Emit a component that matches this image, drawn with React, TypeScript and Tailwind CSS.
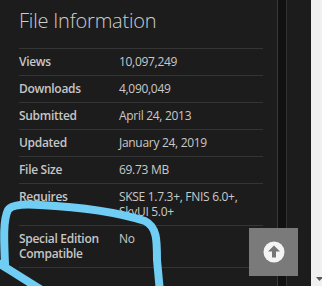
import React from "react";

const rows: { label: React.ReactNode; value: React.ReactNode; tall?: boolean }[] = [
  { label: "Views", value: "10,097,249" },
  { label: "Downloads", value: "4,090,049" },
  { label: "Submitted", value: "April 24, 2013" },
  { label: "Updated", value: "January 24, 2019" },
  { label: "File Size", value: "69.73 MB" },
  {
    label: "Requires",
    value: (
      <>
        SKSE 1.7.3+, FNIS 6.0+,
        <br />
        SkyUI 5.0+
      </>
    ),
  },
  {
    label: (
      <>
        Special Edition
        <br />
        Compatible
      </>
    ),
    value: "No",
  },
];

export default function App() {
  return (
    <div
      className="relative w-[322px] h-[286px] overflow-hidden flex bg-[#1c1c1c] text-[#c9c9c9]"
      style={{ fontFamily: '"Open Sans", "Noto Sans", sans-serif' }}
    >
      <div className="w-[277px] shrink-0 pl-[19px] pr-[14px]">
        <h2 className="pt-[6px] text-[20px] leading-[29px] font-light tracking-[-0.2px] text-[#cdcdcd]">
          File Information
        </h2>
        <div className="mt-[13px] border-t border-[#353535]">
          {rows.map((r, i) => (
            <div
              key={i}
              className="flex border-b border-[#353535] pt-[5px] pb-[6px] text-[12px] leading-[15px] tracking-[-0.3px]"
            >
              <div className="w-[100px] shrink-0 font-semibold text-[#c6c6c6]">{r.label}</div>
              <div className="flex-1 text-[#c9c9c9]">{r.value}</div>
            </div>
          ))}
        </div>
      </div>
      <div className="w-px shrink-0 bg-[#3a3a3a]" />
      <div className="w-[8px] shrink-0 bg-[#111111]" />
      <div className="w-px shrink-0 bg-[#333333]" />
      <div className="w-[24px] shrink-0 bg-[#1c1c1c]" />
      <div className="relative w-[11px] shrink-0 bg-[#f0f0f0]">
        <svg className="absolute left-[5px] top-[277px]" width="7" height="4" viewBox="0 0 7 4">
          <polygon points="0,0 7,0 3.5,4" fill="#5a5a5a" />
        </svg>
      </div>

      {/* scroll-to-top button */}
      <div className="absolute left-[249px] top-[228px] w-[49px] h-[48px] bg-[#7a7a7a] flex items-center justify-center">
        <svg width="22" height="22" viewBox="0 0 22 22">
          <circle cx="11" cy="11" r="10.5" fill="#f4f4f4" />
          <path d="M11 4.5 L17 10.5 L13 10.5 L13 16.5 L9 16.5 L9 10.5 L5 10.5 Z" fill="#767676" />
        </svg>
      </div>

      {/* hand-drawn annotation */}
      <svg className="absolute left-0 top-0 pointer-events-none" width="322" height="286" viewBox="0 0 322 286">
        <path
          d="M 5,264 C 4,240 3,220 8,210 C 12,204 25,204 40,205 C 80,207 120,213 145,221 C 157,227 157,240 157,260 L 160,292"
          fill="none"
          stroke="#70cdf4"
          strokeWidth="8"
          strokeLinecap="round"
          strokeLinejoin="round"
        />
        <path
          d="M -2,263 C 10,270 25,280 45,292"
          fill="none"
          stroke="#70cdf4"
          strokeWidth="8"
          strokeLinecap="round"
        />
      </svg>
    </div>
  );
}
